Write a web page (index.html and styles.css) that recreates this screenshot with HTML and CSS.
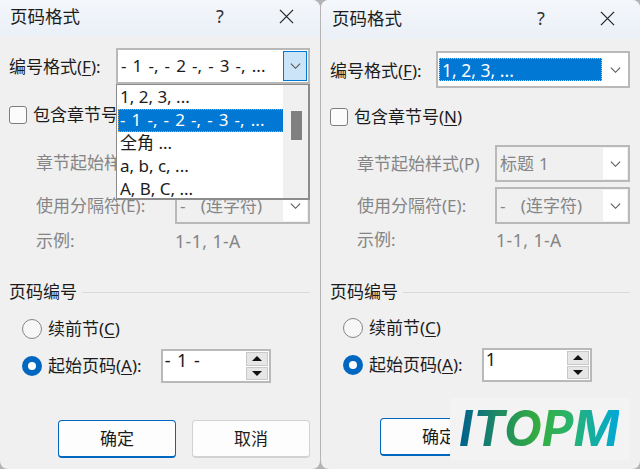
FILE: index.html
```html
<!DOCTYPE html>
<html lang="zh-CN">
<head>
<meta charset="utf-8">
<title>页码格式</title>
<link rel="stylesheet" href="styles.css">
</head>
<body>
<div class="desk">
  <section class="dialog dialog-a">
    <header class="titlebar">
      <h1 class="title">页码格式</h1>
      <span class="help">?</span>
      <svg class="close" viewBox="0 0 16 16"><path d="M1 1 15 15M15 1 1 15"/></svg>
    </header>
    <div class="row format">
      <span class="label">编号格式(<u>F</u>):</span>
      <div class="combo combo-main">
        <span class="value dashed">- 1 -, - 2 -, - 3 -, ...</span>
        <span class="drop drop-active"><svg viewBox="0 0 12 8"><path d="M1 1.5 6 6.5 11 1.5"/></svg></span>
      </div>
    </div>
    <div class="check-row">
      <span class="checkbox"></span>
      <span class="label">包含章节号(<u>N</u>)</span>
    </div>
    <div class="row sub first">
      <span class="label muted">章节起始样式(P)</span>
      <div class="combo combo-sub"><span class="value muted">标题 1</span><span class="drop"><svg viewBox="0 0 12 8"><path d="M1 1.5 6 6.5 11 1.5"/></svg></span></div>
    </div>
    <div class="row sub second">
      <span class="label muted">使用分隔符(E):</span>
      <div class="combo combo-sub"><span class="value muted">-&nbsp;&nbsp;&nbsp;(连字符)</span><span class="drop"><svg viewBox="0 0 12 8"><path d="M1 1.5 6 6.5 11 1.5"/></svg></span></div>
    </div>
    <div class="row sub example">
      <span class="label muted">示例:</span>
      <span class="example-value muted">1-1, 1-A</span>
    </div>
    <div class="group-head"><span class="label">页码编号</span><i class="rule"></i></div>
    <div class="radio-row first-radio"><span class="radio"></span><span class="label">续前节(<u>C</u>)</span></div>
    <div class="radio-row second-radio">
      <span class="radio on"></span><span class="label">起始页码(<u>A</u>):</span>
      <div class="spin">
        <span class="spin-value">- 1 -</span>
        <span class="spin-btns"><b class="up"></b><b class="down"></b></span>
      </div>
    </div>
    <div class="actions">
      <button class="btn primary">确定</button>
      <button class="btn">取消</button>
    </div>
    <ul class="list">
      <li>1, 2, 3, ...</li>
      <li class="sel dashed">- 1 -, - 2 -, - 3 -, ...</li>
      <li>全角 ...</li>
      <li>a, b, c, ...</li>
      <li>A, B, C, ...</li>
      <li class="scroll"><i></i></li>
    </ul>
  </section>

  <section class="dialog dialog-b">
    <header class="titlebar">
      <h1 class="title">页码格式</h1>
      <span class="help">?</span>
      <svg class="close" viewBox="0 0 16 16"><path d="M1 1 15 15M15 1 1 15"/></svg>
    </header>
    <div class="row format">
      <span class="label">编号格式(<u>F</u>):</span>
      <div class="combo combo-main">
        <span class="value selected">1, 2, 3, ...</span>
        <span class="drop"><svg viewBox="0 0 12 8"><path d="M1 1.5 6 6.5 11 1.5"/></svg></span>
      </div>
    </div>
    <div class="check-row">
      <span class="checkbox"></span>
      <span class="label">包含章节号(<u>N</u>)</span>
    </div>
    <div class="row sub first">
      <span class="label muted">章节起始样式(P)</span>
      <div class="combo combo-sub"><span class="value muted">标题 1</span><span class="drop"><svg viewBox="0 0 12 8"><path d="M1 1.5 6 6.5 11 1.5"/></svg></span></div>
    </div>
    <div class="row sub second">
      <span class="label muted">使用分隔符(E):</span>
      <div class="combo combo-sub"><span class="value muted">-&nbsp;&nbsp;&nbsp;(连字符)</span><span class="drop"><svg viewBox="0 0 12 8"><path d="M1 1.5 6 6.5 11 1.5"/></svg></span></div>
    </div>
    <div class="row sub example">
      <span class="label muted">示例:</span>
      <span class="example-value muted">1-1, 1-A</span>
    </div>
    <div class="group-head"><span class="label">页码编号</span><i class="rule"></i></div>
    <div class="radio-row first-radio"><span class="radio"></span><span class="label">续前节(<u>C</u>)</span></div>
    <div class="radio-row second-radio">
      <span class="radio on"></span><span class="label">起始页码(<u>A</u>):</span>
      <div class="spin">
        <span class="spin-value">1</span>
        <span class="spin-btns"><b class="up"></b><b class="down"></b></span>
      </div>
    </div>
    <div class="actions">
      <button class="btn primary">确定</button>
      <button class="btn">取消</button>
    </div>
    <div class="mark"><span>ITOPM</span></div>
  </section>
</div>
</body>
</html>
```
FILE: styles.css
```css
* { box-sizing: border-box; }
html, body { margin: 0; padding: 0; }
body {
  width: 640px;
  height: 469px;
  overflow: hidden;
  font-family: "Noto Sans", "Noto Sans CJK SC", sans-serif;
  font-size: 17px;
  line-height: 20px;
  color: #1c1c1c;
}
.desk {
  display: flex;
  gap: 1px;
  width: 640px;
  height: 469px;
  background: #b4b4b4;
}
.dialog {
  position: relative;
  display: flex;
  flex-direction: column;
  height: 469px;
  background: #f0f0f0;
  padding-left: 9px;
  padding-right: 10px;
}
.dialog-a { width: 320px; border-radius: 0 8px 8px 8px; }
.dialog-b { width: 319px; border-radius: 8px; }

.titlebar {
  display: flex;
  align-items: center;
  margin: 0 -10px 0 -9px;
  padding-left: 10px;
  background: linear-gradient(#f4f7fb, #eaf0f7);
  border-radius: inherit;
  border-bottom-left-radius: 0;
  border-bottom-right-radius: 0;
}
.dialog-a .titlebar { height: 36px; padding-bottom: 4px; }
.dialog-b .titlebar { height: 39px; padding-left: 11px; padding-bottom: 3px; }
.title { flex: 1; margin: 0; font-size: 17.5px; font-weight: 400; }
.help { width: 12px; margin-right: 53px; font-size: 18px; text-align: center; color: #333; }
.close { width: 15px; height: 15px; margin-right: 26px; fill: none; stroke: #222; stroke-width: 1.3; }
.dialog-b .close { margin-right: 25px; }

.row { display: flex; align-items: center; justify-content: space-between; }
.label { white-space: nowrap; }
.format .label { padding-top: 2px; }
.muted { color: #858585; }
u { text-underline-offset: 2px; }

.combo {
  display: flex;
  align-items: stretch;
  flex: none;
  border: 2px solid #b9b9b9;
}
.combo-main { width: 194px; height: 36px; background: #fff; padding: 1px; }
.combo-sub { width: 135px; height: 37px; padding: 1px; }
.combo-sub .value { word-spacing: 0.7px; }
.value { flex: 1; padding-left: 2px; display: flex; align-items: center; white-space: pre; }
.dashed { word-spacing: 1.7px; }
.value.selected {
  margin: 4px 0 4px 0;
  background: #0078d4;
  color: #fff;
  padding-left: 3px;
  font-size: 17.5px;
  outline: 1px dotted #b9c9d9;
  outline-offset: -1px;
}
.drop {
  flex: none;
  width: 24px;
  margin-left: 1px;
  background: #fff;
  display: flex;
  align-items: center;
  justify-content: center;
}
.drop svg { width: 11px; height: 8px; fill: none; stroke: #555; stroke-width: 1.2; }
.drop-active { background: #cce4f7; border: 1px solid #0078d4; }

.check-row { display: flex; align-items: center; gap: 6px; height: 18px; }
.checkbox {
  flex: none;
  width: 18px;
  height: 18px;
  background: #fbfbfb;
  border: 1px solid #7e7e7e;
  border-radius: 3px;
}
.sub { padding-left: 27px; }
.example { justify-content: flex-start; height: 18px; }
.example .label { width: 139px; }
.example-value { white-space: nowrap; font-size: 17.5px; letter-spacing: 0.5px; }

.group-head { display: flex; align-items: center; gap: 5px; height: 20px; }
.rule { flex: 1; height: 1px; background: #d9d9d9; }

.radio-row { display: flex; align-items: center; height: 34px; padding-left: 13px; }
.radio {
  flex: none;
  width: 20px;
  height: 20px;
  margin-right: 6px;
  border-radius: 50%;
  background: #f7f7f7;
  border: 1px solid #858585;
}
.radio.on { background: #fff; border: 6px solid #0067c0; }
.spin {
  display: flex;
  width: 110px;
  height: 34px;
  margin-left: 19px;
  padding: 1px 1px 1px 0;
  background: #fff;
  border: 2px solid #b9b9b9;
}
.spin-value { flex: 1; padding-left: 2px; margin-top: -2px; font-size: 18px; word-spacing: 2px; white-space: nowrap; }
.spin-btns { display: flex; flex-direction: column; gap: 1px; width: 22px; }
.spin-btns b {
  flex: 1;
  display: flex;
  align-items: center;
  justify-content: center;
  background: #e6e6e6;
  border: 1px solid #c8c8c8;
}
.up::before, .down::before {
  content: "";
  width: 0;
  height: 0;
  border-left: 5px solid transparent;
  border-right: 5px solid transparent;
}
.up::before { border-bottom: 5px solid #111; }
.down::before { border-top: 5px solid #111; }

.actions { display: flex; justify-content: space-between; height: 38px; padding-left: 49px; }
.btn {
  width: 118px;
  height: 38px;
  padding: 0;
  font: inherit;
  color: #1c1c1c;
  background: #fdfdfd;
  border: 1px solid #d2d2d2;
  border-bottom-width: 2px;
  border-radius: 4px;
}
.btn.primary { border: 1px solid #0067c0; border-bottom-width: 2px; }

/* Per-dialog vertical rhythm */
.dialog-a .format { margin-top: 12px; }
.dialog-a .check-row { margin-top: 22px; }
.dialog-a .first { margin-top: 20px; }
.dialog-a .second { margin-top: 6px; }
.dialog-a .example { margin-top: 8px; }
.dialog-a .group-head { margin-top: 32px; }
.dialog-a .first-radio { margin-top: 10px; }
.dialog-a .second-radio { margin-top: 3px; }
.dialog-a .actions { margin-top: 37px; }

.dialog-b .format { margin-top: 12px; }
.dialog-b .combo-main { height: 37px; }
.dialog-b .check-row { margin-top: 20px; }
.dialog-b .first { margin-top: 19px; }
.dialog-b .second { margin-top: 5px; }
.dialog-b .example { margin-top: 7px; }
.dialog-b .group-head { margin-top: 33px; }
.dialog-b .first-radio { margin-top: 9px; }
.dialog-b .second-radio { margin-top: 3px; }
.dialog-b .actions { margin-top: 36px; padding-left: 50px; }

/* Open dropdown over the form */
.list {
  position: absolute;
  left: 116px;
  top: 84px;
  width: 194px;
  height: 116px;
  margin: 0;
  padding: 1px 0 0 1px;
  list-style: none;
  background: #fff;
  border: 1px solid #8c8c8c;
  border-width: 1px 2px 2px 1px;
}
.list li { height: 23px; width: 166px; padding-left: 2px; line-height: 22px; white-space: nowrap; }
.list .sel { background: #0078d4; color: #fff; outline: 1px dotted #c9a36a; outline-offset: -1px; }
.list .scroll {
  position: absolute;
  right: 0;
  top: 0;
  width: 25px;
  height: 100%;
  padding: 26px 0 0 8px;
  background: #f0f0f0;
}
.list .scroll i { display: block; width: 11px; height: 29px; background: #808080; }

/* Watermark over the lower-right corner */
.mark {
  position: absolute;
  left: 129px;
  top: 398px;
  width: 180px;
  height: 62px;
  padding-left: 9px;
  display: flex;
  align-items: center;
  background: #f3f3f3;
  border-radius: 2px;
}
.mark span {
  font-family: Inter, sans-serif;
  font-style: italic;
  font-weight: 700;
  font-size: 49px;
  line-height: 62px;
  background: linear-gradient(90deg, #00608f 0%, #1f8a63 25%, #35ad3f 50%, #2bb36a 68%, #00a8d8 100%);
  -webkit-background-clip: text;
  background-clip: text;
  color: transparent;
}
```
